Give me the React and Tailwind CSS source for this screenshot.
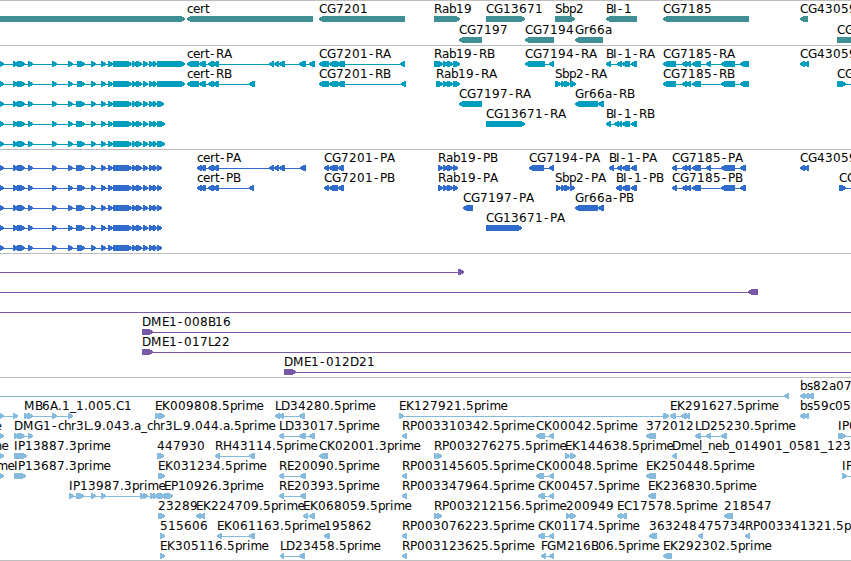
import React from 'react';

const WIDTH = 851;

// pixel advance of every character used in the labels (digits default to 8)
const ADVANCE = {
  A: 8, B: 7, C: 8, D: 9, E: 7, F: 6, G: 9, H: 9, I: 4, K: 8, L: 6, M: 11, P: 7, R: 8, S: 7,
  a: 7, b: 7, c: 6, e: 7, h: 7, i: 3.5, l: 3, m: 11, n: 7, p: 7, r: 5, s: 6, t: 4,
  '-': 7, '_': 6, '.': 4,
};

const R = 'right';
const L = 'left';

// feature: [label, labelX, direction, blocks, lineEnds?]
const model = (thick, end) => [
  '', 0, R,
  [[-1, 4], [13, 18], [17, 25], [28, 33], [52, 57], [68, 73], [thick, 85], [91, 96], [101, 106], [108, 113],
    [113, 131], [126, 132], [132, 137], [136, 142], [143, 148], [149, 154], [153, 157], ...end],
];

const rp = (name) => [name, 402, L, [[402, 407]]];

const tracks = [
  {
    name: 'genes',
    color: 'text-[#3f8f94]',
    className: 'h-[45px]',
    rowClass: 'h-[21px]',
    rows: [
      [
        ['', 0, R, [[-10, 185]]],
        ['cert', 187, L, [[187, 313]]],
        ['CG7201', 319, L, [[319, 405]]],
        ['Rab19', 434, R, [[434, 460]]],
        ['CG13671', 486, R, [[486, 525]]],
        ['Sbp2', 555, R, [[555, 575]]],
        ['BI-1', 606, L, [[606, 637]]],
        ['CG7185', 663, L, [[663, 749]]],
        ['CG43059', 800, L, [[800, 808]]],
      ],
      [
        ['CG7197', 459, L, [[459, 482]]],
        ['CG7194', 525, L, [[525, 554]]],
        ['Gr66a', 575, L, [[575, 603]]],
        ['CG', 837, R, [[837, 900]]],
      ],
    ],
  },
  {
    name: 'transcripts',
    color: 'text-[#009ebe]',
    className: 'h-[104px]',
    rowClass: 'h-5',
    rows: [
      [
        model(77, [[157, 185]]),
        ['cert-RA', 187, L, [[187, 199], [199, 206], [208, 214], [213, 219], [269, 274], [274, 279], [279, 285], [299, 306], [309, 315]]],
        ['CG7201-RA', 319, L, [[319, 329], [329, 338], [337, 345], [400, 405]]],
        ['Rab19-RB', 434, R, [[434, 438], [436, 443], [443, 448], [447, 453], [453, 460]]],
        ['CG7194-RA', 525, L, [[525, 545], [549, 554]]],
        ['BI-1-RA', 606, L, [[606, 611], [617, 622], [622, 630], [631, 637]]],
        ['CG7185-RA', 663, L, [[663, 676], [682, 687], [686, 691], [692, 701], [706, 711], [721, 735], [740, 749]]],
        ['CG43059', 800, L, [[800, 805], [804, 809]]],
      ],
      [
        model(77, [[157, 185]]),
        ['cert-RB', 187, L, [[187, 199], [199, 206], [208, 214], [213, 219], [249, 255]]],
        ['CG7201-RB', 319, L, [[319, 329], [329, 338], [337, 345], [401, 406]]],
        ['Rab19-RA', 436, R, [[436, 443], [443, 448], [447, 453], [453, 460]]],
        ['Sbp2-RA', 555, R, [[555, 561], [561, 566], [564, 570], [570, 576]]],
        ['CG7185-RB', 663, L, [[663, 676], [682, 687], [686, 691], [692, 701], [721, 735], [740, 749]]],
        ['CG', 837, R, [[837, 846]], [837, 860]],
      ],
      [
        model(76, [[157, 164]]),
        ['CG7197-RA', 459, L, [[459, 482]]],
        ['Gr66a-RB', 575, L, [[575, 598], [598, 604]]],
      ],
      [
        model(76, [[157, 165]]),
        ['CG13671-RA', 486, R, [[486, 525]]],
        ['BI-1-RB', 606, L, [[606, 611], [614, 619], [617, 622], [622, 630], [631, 637]]],
      ],
      [model(77, [[157, 165]])],
    ],
  },
  {
    name: 'proteins',
    color: 'text-[#306ccc]',
    className: 'h-[104px]',
    rowClass: 'h-5',
    rows: [
      [
        model(76, [[157, 162]]),
        ['cert-PA', 197, L, [[197, 202], [200, 206], [208, 214], [213, 219], [269, 274], [274, 279], [279, 285], [300, 306]]],
        ['CG7201-PA', 324, L, [[324, 329], [329, 338], [338, 344]]],
        ['Rab19-PB', 438, R, [[438, 443], [443, 448], [447, 453], [453, 458]]],
        ['CG7194-PA', 529, L, [[529, 544], [549, 554]]],
        ['BI-1-PA', 609, L, [[609, 614], [617, 622], [622, 630], [631, 637]]],
        ['CG7185-PA', 672, L, [[672, 677], [682, 687], [686, 691], [692, 701], [706, 711], [721, 735], [740, 746]]],
        ['CG43059', 800, L, [[800, 805], [804, 809]]],
      ],
      [
        model(77, [[157, 162]]),
        ['cert-PB', 197, L, [[197, 202], [200, 206], [208, 214], [213, 219], [249, 254]]],
        ['CG7201-PB', 324, L, [[324, 329], [329, 338], [338, 344]]],
        ['Rab19-PA', 438, R, [[438, 443], [443, 448], [447, 453], [453, 458]]],
        ['Sbp2-PA', 555, R, [[556, 561], [561, 566], [564, 570], [570, 575]]],
        ['BI-1-PB', 616, L, [[616, 622], [622, 630], [631, 637]]],
        ['CG7185-PB', 672, L, [[672, 677], [682, 687], [686, 691], [692, 701], [721, 735], [740, 746]]],
        ['CG', 839, R, [[839, 846]], [839, 860]],
      ],
      [
        model(76, [[157, 162]]),
        ['CG7197-PA', 463, L, [[463, 473]]],
        ['Gr66a-PB', 575, L, [[575, 598], [598, 604]]],
      ],
      [
        model(76, [[157, 162]]),
        ['CG13671-PA', 486, R, [[486, 522]]],
      ],
      [model(77, [[157, 162]])],
    ],
  },
  {
    name: 'clones',
    color: 'text-[#7759a8]',
    className: 'h-[124px]',
    rowClass: 'h-5',
    rows: [
      [['', 0, R, [[458, 464]], [-5, 458]]],
      [['', 0, L, [[748, 758]], [-5, 758]]],
      [['', 0, R, [], [-5, 860]]],
      [['DME1-008B16', 142, R, [[142, 153]], [142, 860]]],
      [['DME1-017L22', 142, R, [[142, 153]], [142, 860]]],
      [['DME1-012D21', 284, R, [[284, 296]], [284, 860]]],
    ],
  },
  {
    name: 'ests',
    color: 'text-[#87bbdd]',
    className: 'h-[183px]',
    rowClass: 'h-5',
    rows: [
      [
        ['', 0, L, [[784, 789]], [-5, 789]],
        ['bs82a07', 800, L, [[800, 805], [804, 809], [808, 814]]],
      ],
      [
        ['', 0, R, [[-1, 4], [13, 18]]],
        ['MB6A.1_1.005.C1', 24, R, [[24, 29], [27, 33], [52, 57], [68, 73]]],
        ['EK009808.5prime', 155, R, [[155, 160], [158, 165]]],
        ['LD34280.5prime', 275, L, [[275, 280], [279, 284], [299, 305]]],
        ['EK127921.5prime', 399, R, [[399, 404], [663, 669]]],
        ['EK291627.5prime', 670, L, [[670, 676], [681, 687], [685, 690]]],
        ['bs59c05', 800, L, [[800, 805], [804, 809]]],
      ],
      [
        ['prime', -32, R, [[-1, 4]]],
        ['DMG1-chr3L.9.043.a_chr3L.9.044.a.5prime', 14, R, [[14, 18], [17, 25], [28, 33]]],
        ['LD33017.5prime', 279, L, [[279, 284], [299, 306], [309, 315]]],
        rp('RP003310342.5prime'),
        ['CK00042.5prime', 536, L, [[536, 545], [549, 554]]],
        ['372012', 646, L, [[646, 656]]],
        ['LD25230.5prime', 695, L, [[695, 701], [706, 711], [721, 727]]],
        ['IP0', 838, R, [[838, 846]], [838, 860]],
      ],
      [
        ['prime', -25, R, [[-1, 4]]],
        ['IP13887.3prime', 14, R, [[14, 27]]],
        ['447930', 157, R, [[157, 164]]],
        ['RH43114.5prime', 215, L, [[215, 220], [249, 255]]],
        ['CK02001.3prime', 319, L, [[319, 328]]],
        ['RP003276275.5prime', 434, R, [[434, 439], [437, 442]]],
        ['EK144638.5prime', 565, R, [[565, 570], [570, 576]]],
        ['Dmel_neb_014901_0581_123', 672, L, [[672, 677]]],
      ],
      [
        ['prime', -19, R, [[-1, 4]]],
        ['IP13687.3prime', 14, R, [[14, 26]]],
        ['EK031234.5prime', 158, R, [[158, 165]]],
        ['RE20090.5prime', 279, L, [[279, 284], [300, 306]]],
        rp('RP003145605.5prime'),
        ['CK00048.5prime', 536, L, [[536, 544], [549, 554]]],
        ['EK250448.5prime', 646, L, [[646, 656]]],
        ['IP', 842, R, [[842, 847]], [842, 860]],
      ],
      [
        ['IP13987.3prime', 69, R, [[69, 74], [76, 84], [91, 96], [101, 106], [140, 145], [143, 148], [150, 154], [153, 158], [157, 165]]],
        ['EP10926.3prime', 164, R, [[164, 173]]],
        ['RE20393.5prime', 279, L, [[279, 284], [300, 306]]],
        rp('RP003347964.5prime'),
        ['CK00457.5prime', 538, L, [[538, 545], [549, 554]]],
        ['EK236830.5prime', 648, L, [[648, 656]]],
      ],
      [
        ['23289', 158, R, [[158, 165]]],
        ['EK224709.5prime', 196, L, [[196, 201], [200, 205]]],
        ['EK068059.5prime', 303, L, [[303, 308], [309, 315]]],
        ['RP003212156.5prime', 434, R, [[434, 439], [437, 442]]],
        ['200949', 566, R, [[566, 571], [570, 576]]],
        ['EC17578.5prime', 617, L, [[617, 622], [621, 627]]],
        ['218547', 724, L, [[724, 733]]],
      ],
      [
        ['515606', 160, R, [[160, 165]]],
        ['EK061163.5prime', 217, L, [[217, 222], [249, 255]]],
        ['195862', 324, L, [[324, 330]]],
        rp('RP003076223.5prime'),
        ['CK01174.5prime', 538, L, [[538, 545], [549, 554]]],
        ['363248', 649, L, [[649, 657]]],
        ['475734', 698, L, [[698, 703]]],
        ['RP003341321.5p', 745, L, [[745, 750]]],
      ],
      [
        ['EK305116.5prime', 160, R, [[160, 165]]],
        ['LD23458.5prime', 280, L, [[280, 284], [299, 305]]],
        rp('RP003123625.5prime'),
        ['FGM216B06.5prime', 541, L, [[541, 546], [549, 554]]],
        ['EK292302.5prime', 663, L, [[663, 672]]],
      ],
    ],
  },
];

const charPositions = (text, start) => {
  let x = start;
  return [...text].map((ch) => {
    // the hyphen is narrower than its slot, so centre it
    const at = ch === '-' ? x + 1 : x;
    x += ADVANCE[ch] ?? 8;
    return at;
  }).join(' ');
};

const arrowPoints = ([from, to], dir) => {
  const head = Math.min(5, to - from);
  if (dir === R) {
    const neck = to - head;
    return `${from},15 ${neck + 1.5},15 ${to},17 ${to},19 ${neck + 1.5},21 ${from},21`;
  }
  const neck = from + head;
  return `${to},15 ${neck - 1.5},15 ${from},17 ${from},19 ${neck - 1.5},21 ${to},21`;
};

const Feature = ({ feature }) => {
  const [label, labelX, dir, blocks, ends] = feature;
  const [x1, x2] = ends || [blocks[0][0], blocks[blocks.length - 1][1]];

  return (
    <g>
      {(ends || blocks.length > 1) && <rect x={x1} y="18" width={x2 - x1} height="1" />}
      {blocks.map((block) => (
        <polygon key={block[0]} points={arrowPoints(block, dir)} />
      ))}
      {label && (
        <text x={charPositions(label, labelX)} y="12" className="fill-black">
          {label}
        </text>
      )}
    </g>
  );
};

const Track = ({ track }) => (
  <section className={`flex flex-col border-t border-[#bebebe] ${track.color} ${track.className}`}>
    {track.rows.map((row, i) => (
      <div key={i} className={track.rowClass}>
        <svg
          width={WIDTH}
          height="22"
          fill="currentColor"
          shapeRendering="crispEdges"
          className="block text-[12px] [font-family:'DejaVu_Sans',sans-serif]"
        >
          {row.map((feature, n) => (
            <Feature key={n} feature={feature} />
          ))}
        </svg>
      </div>
    ))}
  </section>
);

const App = () => {
  return (
    <main className="w-[851px] h-[561px] overflow-hidden bg-white border-b border-[#bebebe]">
      {tracks.map((track) => (
        <Track key={track.name} track={track} />
      ))}
    </main>
  );
};

export default App;
